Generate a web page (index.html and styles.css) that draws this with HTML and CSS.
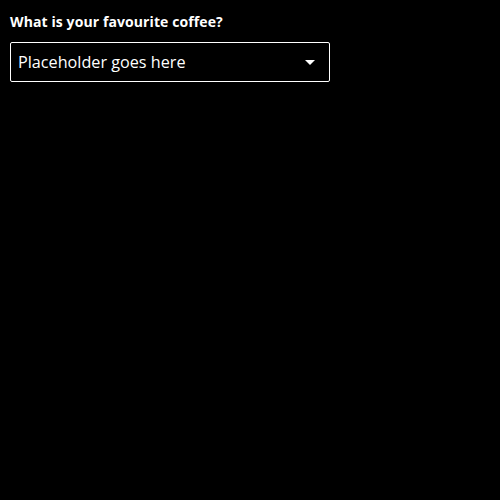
FILE: index.html
```html
<!DOCTYPE html>
<html>
<head>
<link rel="stylesheet" href="styles.css">
</head>
<body>
<div class="field">
  <label class="label">What is your favourite coffee?</label>
  <div class="select">
    <span class="placeholder">Placeholder goes here</span>
    <svg class="arrow" width="10" height="5" viewBox="0 0 10 5"><path d="M0 0 L10 0 L5 5 Z" fill="#fff"/></svg>
  </div>
</div>
</body>
</html>
```
FILE: styles.css
```css
html, body { background: #000; margin: 0; }
body { padding: 10px; font-family: "Open Sans", sans-serif; color: #fff; }
.field { display: flex; flex-direction: column; gap: 8px; width: 320px; }
.label { font-size: 14px; font-weight: 700; line-height: 24px; letter-spacing: 0.1px; }
.select { box-sizing: border-box; height: 40px; border: 1px solid #fff; border-radius: 2px; display: flex; align-items: center; justify-content: space-between; padding: 0 14px 0 7px; }
.placeholder { font-size: 16.2px; }
.arrow { display: block; }
```
